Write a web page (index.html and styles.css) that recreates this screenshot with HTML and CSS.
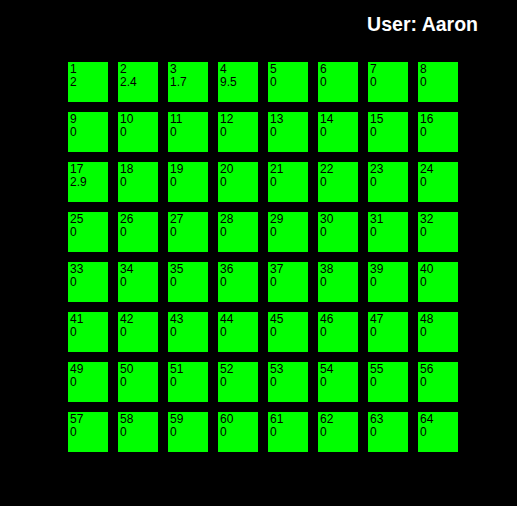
FILE: index.html
```html
<!DOCTYPE html>
<html>
<head>
<meta charset="utf-8">
<link rel="stylesheet" href="styles.css">
</head>
<body>
<div class="header"><span class="user">User: Aaron</span></div>
<div class="grid" id="grid"></div>
<script>
var vals = {1:"2",2:"2.4",3:"1.7",4:"9.5",17:"2.9"};
var g = document.getElementById("grid");
for (var i = 1; i <= 64; i++) {
  var c = document.createElement("div");
  c.className = "cell";
  var a = document.createElement("div"); a.textContent = i;
  var b = document.createElement("div"); b.textContent = vals[i] || "0";
  c.appendChild(a); c.appendChild(b);
  g.appendChild(c);
}
</script>
</body>
</html>
```
FILE: styles.css
```css
html, body { margin: 0; padding: 0; background: #000; }
body { width: 517px; height: 506px; overflow: hidden; font-family: "Liberation Sans", Arial, sans-serif; }
.header { display: flex; justify-content: flex-end; padding: 13px 39px 0 0; height: 62px; box-sizing: border-box; }
.user { color: #fff; font-weight: bold; font-size: 19.5px; line-height: 22px; }
.grid { display: grid; grid-template-columns: repeat(8, 40px); grid-auto-rows: 40px; gap: 10px; padding-left: 68px; }
.cell { background: #00ff00; color: #000; font-size: 12px; line-height: 13px; padding: 1px 0 0 2px; box-sizing: border-box; }
```
